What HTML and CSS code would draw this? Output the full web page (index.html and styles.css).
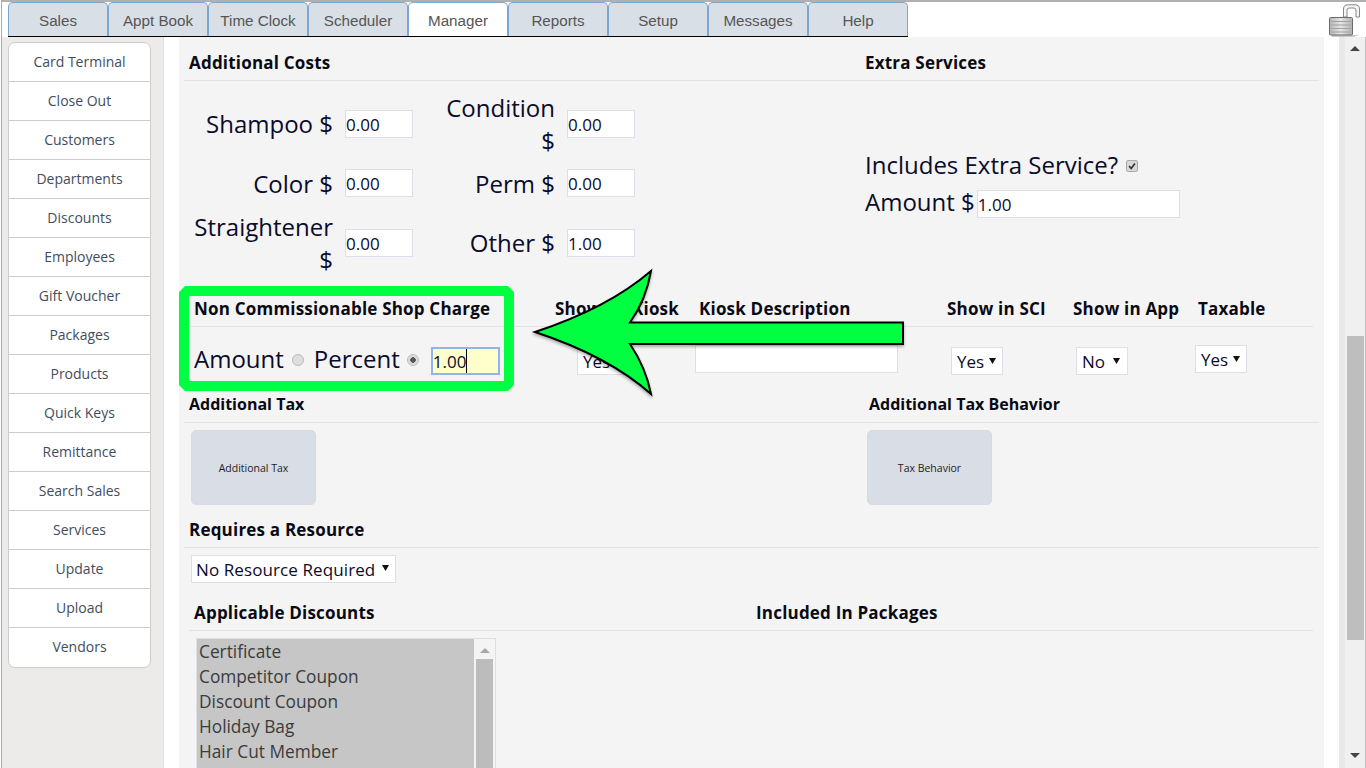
FILE: index.html
```html
<!DOCTYPE html>
<html lang="en">
<head>
<meta charset="utf-8">
<title>Manager</title>
<link rel="stylesheet" href="styles.css">
</head>
<body>
<div class="app">
  <header class="topbar">
    <nav class="tabs">
      <a class="tab">Sales</a><a class="tab">Appt Book</a><a class="tab">Time Clock</a><a class="tab">Scheduler</a><a class="tab active">Manager</a><a class="tab">Reports</a><a class="tab">Setup</a><a class="tab">Messages</a><a class="tab">Help</a>
    </nav>
    <svg class="lock" width="32" height="33" viewBox="0 0 32 33">
      <defs>
        <linearGradient id="lockBody" x1="0" y1="0" x2="1" y2="0">
          <stop offset="0" stop-color="#b4b4b4"/><stop offset=".5" stop-color="#e8e8e8"/><stop offset=".62" stop-color="#d6d6d6"/><stop offset="1" stop-color="#b0b0b0"/>
        </linearGradient>
      </defs>
      <path d="M3 31h27l-5 2H3z" fill="#c9c9c9"/>
      <path d="M14.500 13V5Q14.500 .8 19 .8h7Q30.500 .8 30.500 5V13h-3.500V6q0-2-2.200-2h-4.600q-2.200 0-2.200 2v7z" fill="#f6f6f6" stroke="#858585" stroke-width="1"/>
      <rect x=".5" y="13.500" width="23" height="17.500" rx="1" fill="url(#lockBody)" stroke="#6a6a6a"/>
      <path d="M2 17.500h20M2 21h20M2 24.500h20M2 28h20" stroke="#a2a2a2" stroke-width="1"/>
    </svg>
  </header>
  <div class="workspace">
    <aside class="sidebar">
      <ul class="menu">
        <li>Card Terminal</li><li>Close Out</li><li>Customers</li><li>Departments</li><li>Discounts</li><li>Employees</li><li>Gift Voucher</li><li>Packages</li><li>Products</li><li>Quick Keys</li><li>Remittance</li><li>Search Sales</li><li>Services</li><li>Update</li><li>Upload</li><li>Vendors</li>
      </ul>
    </aside>
    <main class="main">
      <div class="panel">
        <section class="costs">
          <div class="col-costs">
            <h2 class="head head-first">Additional Costs</h2>
            <div class="cost-grid">
              <label class="big raised">Shampoo $</label><input class="field" value="0.00"><label class="big second raised">Condition $</label><input class="field" value="0.00">
              <label class="big">Color $</label><input class="field" value="0.00"><label class="big second">Perm $</label><input class="field" value="0.00">
              <label class="big">Straightener $</label><input class="field" value="0.00"><label class="big second">Other $</label><input class="field" value="1.00">
            </div>
          </div>
          <div class="col-extra">
            <h2 class="head head-first">Extra Services</h2>
            <div class="extra-body">
              <div class="big-line big">Includes Extra Service? <input class="check" type="checkbox" checked></div>
              <div class="big-line amount-line big">Amount $<input class="field amount" value="1.00"></div>
            </div>
          </div>
        </section>

        <section class="options">
          <div class="options-grid options-head">
            <h2 class="cell-head nc">Non Commissionable Shop Charge</h2>
            <h2 class="cell-head">Show in&nbsp; Kiosk</h2>
            <h2 class="cell-head">Kiosk Description</h2>
            <h2 class="cell-head">Show in SCI</h2>
            <h2 class="cell-head">Show in App</h2>
            <h2 class="cell-head">Taxable</h2>
          </div>
          <div class="options-grid options-row">
            <div class="charge big">
              <span>Amount</span><input class="radio" type="radio" name="charge">
              <span class="percent">Percent</span><input class="radio second-radio" type="radio" name="charge" checked>
              <span class="focus-wrap"><input class="field focused" value="1.00"><i class="caret"></i></span>
            </div>
            <div><select class="pick kiosk"><option>Yes</option></select></div>
            <div><input class="field desc"></div>
            <div><select class="pick sci"><option>Yes</option></select></div>
            <div><select class="pick app-sel"><option>No</option></select></div>
            <div><select class="pick tax"><option>Yes</option></select></div>
          </div>
        </section>

        <section class="tax-section">
          <div class="tax-heads">
            <h2 class="head tax-head">Additional Tax</h2>
            <h2 class="head tax-head tax-right">Additional Tax Behavior</h2>
          </div>
          <div class="tax-buttons">
            <button class="tile">Additional Tax</button>
            <button class="tile tile-right">Tax Behavior</button>
          </div>
        </section>

        <section>
          <h2 class="head res-head">Requires a Resource</h2>
          <div class="res-row"><select class="pick res-sel"><option>No Resource Required</option></select></div>
        </section>

        <section>
          <div class="disc-heads">
            <h2 class="disc-left">Applicable Discounts</h2>
            <h2 class="disc-right">Included In Packages</h2>
          </div>
          <div class="listbox">
            <ul class="list-items">
              <li>Certificate</li><li>Competitor Coupon</li><li>Discount Coupon</li><li>Holiday Bag</li><li>Hair Cut Member</li>
            </ul>
            <div class="list-scroll"><span class="list-up"></span><span class="list-thumb"></span></div>
          </div>
        </section>
      </div>
    </main>
    <div class="scrollbar">
      <span class="sb-up"></span>
      <span class="sb-thumb"></span>
      <span class="sb-down"></span>
    </div>
  </div>
  <svg class="overlay" width="1366" height="768" viewBox="0 0 1366 768">
    <defs>
      <filter id="soft" x="-5%" y="-5%" width="110%" height="115%">
        <feDropShadow dx="0" dy="2" stdDeviation="1.500" flood-color="#000" flood-opacity=".3"/>
      </filter>
    </defs>
    <path fill="#00ff41" fill-rule="evenodd" d="M185 286H508L514 292V385L508 391H185L179 385V292ZM189 296V381H504V296Z"/>
    <path filter="url(#soft)" fill="#00ff41" stroke="#000" stroke-width="2" stroke-linejoin="miter" d="M535 332Q608 308 651 271Q646 300 630 322.500H903V344H630Q646 368 651 394Q608 356 535 332Z"/>
  </svg>
</div>
</body>
</html>
```

FILE: styles.css
```css
* { box-sizing: border-box; }
html, body { margin: 0; height: 768px; overflow: hidden; background: #fff; }
body { font-family: "Open Sans", sans-serif; color: #0b0b2a; }
h2 { margin: 0; }
ul { margin: 0; padding: 0; list-style: none; }

.app { position: relative; height: 768px; margin-left: 1px; border-left: 1px solid #aaa; display: flex; flex-direction: column; overflow: hidden; }

.topbar { height: 37px; flex: none; display: flex; justify-content: space-between; border-top: 2px solid #b0b0b0; padding: 0 5px 0 6px; background: #fff; }
.tabs { display: flex; height: 35px; border-bottom: 1px solid #000; }
.tab { width: 100px; height: 34px; display: flex; align-items: center; justify-content: center; padding-top: 2px; font: 15.200px "Liberation Sans", Arial, sans-serif; color: #555; background: #d9dfe6; border: 1px solid #7ba7cf; border-bottom: 0; border-radius: 5px 5px 0 0; }
.tab.active { background: #fff; }
.lock { margin-top: 2px; }

.workspace { flex: 1; display: flex; min-height: 0; }
.sidebar { width: 162px; flex: none; background: #ecebe9; border-right: 1px solid #dedede; padding: 5px 12px 0 6px; }
.menu { background: #fff; border: 1px solid #ccc; border-radius: 7px; width: 143px; }
.menu li { height: 39px; display: flex; align-items: center; justify-content: center; padding-bottom: 2px; font-size: 14px; color: #3f4d5e; border-bottom: 1px solid #ccc; }
.menu li:last-child { border-bottom: 0; }

.main { flex: 1; min-width: 0; background: #fff; padding: 0 15px; overflow: hidden; }
.panel { background: #f4f4f4; padding: 0 5px; height: 731px; overflow: hidden; }

.head { display: flex; align-items: flex-end; font-size: 17px; line-height: 20px; letter-spacing: .2px; font-weight: 700; color: #0a0a14; padding: 0 0 7px 5px; border-bottom: 1px solid #e2e2e6; }
.head-first { height: 44px; }

.costs { display: flex; height: 249px; }
.col-costs { width: 676px; flex: none; }
.col-extra { flex: 1; }
.big { font-size: 24px; line-height: 33px; color: #0b0b2a; }

.cost-grid { display: grid; grid-template-columns: 144px 68px 130px 68px; grid-template-rows: 66px 52px 67px; column-gap: 12px; margin: 10px 0 0 5px; align-items: center; }
.cost-grid label { text-align: right; }
.cost-grid .raised { padding-bottom: 1px; }
.cost-grid .second { margin-left: 13px; }

.field { height: 28px; width: 68px; border: 1px solid #dcdfe8; background: #fff; font: 17px "Open Sans", sans-serif; color: #0b0b2a; padding: 1px 1px 0 0; margin: 0; outline: 0; }

.extra-body { margin-top: 64px; padding-left: 5px; }
.big-line { height: 38px; display: flex; align-items: center; }
.amount-line { height: 36px; }
.check { appearance: none; width: 12px; height: 12px; margin: 4px 0 0 8px; background: #d8d8d8 url("data:image/svg+xml,%3Csvg xmlns='http://www.w3.org/2000/svg' viewBox='0 0 12 12'%3E%3Cpath d='M2.500 6l2.500 3 4.500-6' fill='none' stroke='%23333' stroke-width='2'/%3E%3C/svg%3E") center/contain no-repeat; border: 1px solid #aaa; border-radius: 2px; }
.amount { width: 203px; margin: 6px 0 0 2px; }

.options-grid { display: grid; grid-template-columns: 361px 144px 248px 126px 125px 120px; margin-left: 5px; width: 1124px; }
.options-head { height: 41px; border-bottom: 1px solid #e2e2e6; align-items: end; }
.cell-head { font-size: 17px; line-height: 20px; letter-spacing: .2px; font-weight: 700; color: #0a0a14; padding: 0 0 7px 5px; white-space: nowrap; }
.options-row { height: 64px; }

.charge { display: flex; align-items: center; height: 64px; padding: 0 0 0 5px; margin-top: -1px; }
.radio { appearance: none; width: 12px; height: 12px; margin: 3px 0 0 8px; border: 1px solid #bbb; border-radius: 50%; background: #dedede; flex: none; }
.radio:checked { background: radial-gradient(circle, #555 0 2.500px, #dedede 3px); }
.second-radio { margin-left: 7px; }
.percent { margin-left: 10px; }
.focus-wrap { position: relative; margin: 5px 0 0 12px; display: block; height: 28px; }
.focused { background: #ffffcc; border: 2px solid #8fb4ee; display: block; width: 69px; }
.caret { position: absolute; left: 35px; top: 2px; width: 1px; height: 24px; background: #000; }

.pick { appearance: none; height: 28px; width: 52px; border: 1px solid #dcdfe8; border-radius: 0; background: #fff url("data:image/svg+xml,%3Csvg xmlns='http://www.w3.org/2000/svg' width='7' height='6'%3E%3Cpath d='M0 0h7L3.500 6z' fill='%23111'/%3E%3C/svg%3E") no-repeat right 6px top 10px; font: 17px "Open Sans", sans-serif; color: #0b0b2a; padding: 1px 0 0 5px; outline: 0; }
.kiosk { margin: 20px 0 0 27px; }
.desc { width: 203px; margin: 18px 0 0 1px; display: block; }
.sci { margin: 20px 0 0 9px; }
.app-sel { margin: 20px 0 0 8px; background-position: right 7px top 10px; }
.tax { margin: 18px 0 0 2px; }

.tax-heads { display: flex; height: 32px; }
.tax-head { width: 680px; height: 32px; font-size: 16px; letter-spacing: 0; padding-bottom: 8px; }
.tax-right { flex: 1; }
.tax-buttons { display: flex; padding-top: 7px; height: 82px; }
.tile { width: 125px; height: 75px; border: 1px solid #d6dbe3; border-radius: 5px; background: #d9dde5; font: 10.500px "Open Sans", sans-serif; color: #222; padding: 0; }
.tax-buttons .tile:first-child { margin-left: 7px; }
.tile-right { margin-left: 551px; }

.res-head { height: 43px; }
.res-row { padding: 7px 0 0 7px; height: 35px; }
.res-sel { width: 205px; letter-spacing: .1px; padding-left: 4px; background-position: right 6px top 9px; }

.disc-heads { display: flex; height: 48px; margin-left: 5px; width: 1124px; border-bottom: 1px solid #e2e2e6; align-items: flex-end; }
.disc-left, .disc-right { font-size: 17px; line-height: 20px; letter-spacing: .2px; font-weight: 700; color: #0a0a14; padding-bottom: 7px; }
.disc-left { width: 567px; padding-left: 5px; }

.listbox { width: 300px; margin: 7px 0 0 12px; border: 1px solid #dcdfe8; background: #fff; display: flex; height: 160px; }
.list-items { width: 277px; background: #c6c6c6; font-size: 17.300px; line-height: 25px; color: #3b3b3b; padding-left: 2px; }
.list-scroll { flex: 1; background: #f4f4f4; display: flex; flex-direction: column; align-items: center; padding-top: 9px; }
.list-up { width: 0; height: 0; border: 5px solid transparent; border-top: 0; border-bottom: 5px solid #a8a8a8; }
.list-thumb { width: 17px; flex: 1; margin-top: 6px; background: #bcbcbc; }

.scrollbar { width: 27px; flex: none; position: relative; background: #f0f0f0; border-left: 6px solid #e9e9e9; border-right: 1px solid #bdbdbd; }
.sb-up { position: absolute; left: 5px; top: 9px; width: 0; height: 0; border: 5px solid transparent; border-top: 0; border-bottom: 5px solid #444; }
.sb-thumb { position: absolute; left: 2px; top: 299px; width: 17px; height: 304px; background: #bebebe; }
.sb-down { position: absolute; left: 5px; top: 716px; width: 0; height: 0; border: 5px solid transparent; border-bottom: 0; border-top: 5px solid #444; }

.overlay { position: absolute; left: -2px; top: 0; pointer-events: none; }
```
